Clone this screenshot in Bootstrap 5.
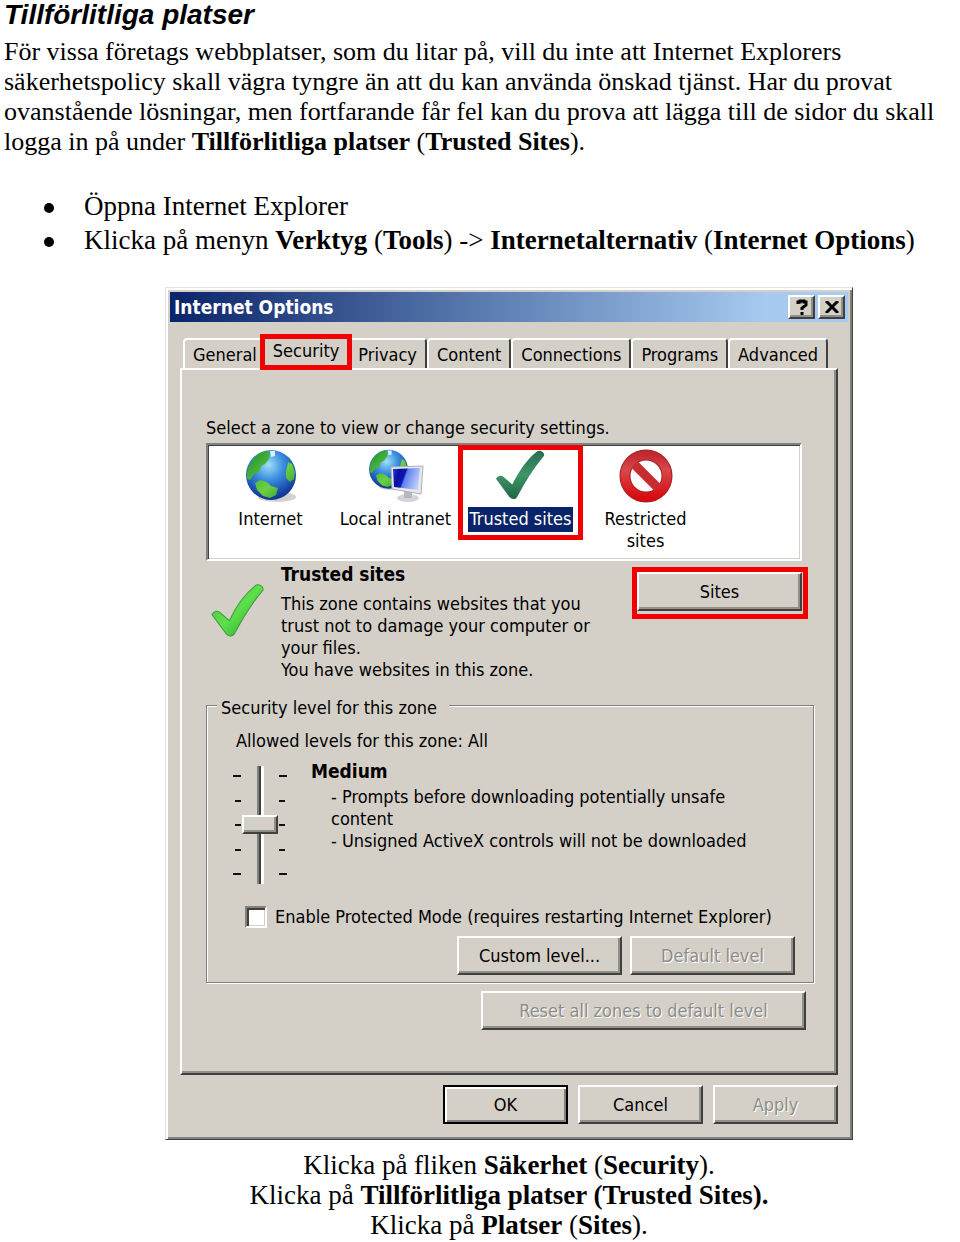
<!DOCTYPE html>
<html lang="sv">
<head>
<meta charset="utf-8">
<meta name="viewport" content="width=device-width, initial-scale=1">
<title>Tillförlitliga platser</title>
<link href="https://cdn.jsdelivr.net/npm/bootstrap@5.3.0/dist/css/bootstrap.min.css" rel="stylesheet">
<style>
:root{--face:#d4d0c8;--shade:#808080;--dark:#404040;--hot:#f00000}
body{font-family:"Liberation Serif",serif;font-size:26px;line-height:30px;color:#000;background:#fff}
.doc-title{font:italic bold 28px/30px "Liberation Sans",sans-serif;margin:0 0 7px}
.steps{padding-left:40px;font-size:27px;line-height:34px;margin:32px 0 30px}
.steps li::before{content:"";display:inline-block;width:10px;height:10px;border-radius:50%;background:#000;margin-right:30px;vertical-align:2px}
.figure-block{padding-left:54px}
.caption-text{font-size:27px;line-height:30px;margin:10px 0 0}
.dialog{max-width:688px;background:var(--face);font:18px/22px "DejaVu Sans Condensed","DejaVu Sans",sans-serif;font-stretch:condensed;
 border:1px solid;border-color:#e4e2de var(--dark) var(--dark) #e4e2de;
 box-shadow:inset 2px 2px #fff,inset -2px -2px var(--shade);padding:4px}
.dialog-body{padding:0 10px}
.strong-text{font-size:19px;font-weight:bold}
.title-bar{height:30px;padding:0 3px 0 4px;gap:3px;background:linear-gradient(90deg,#0a246a,#a6caf0 88%);color:#fff}
.dialog button{color:#000;font-size:18px;line-height:22px}
.face-btn{background:var(--face);border:2px solid;border-color:#fff var(--dark) var(--dark) #fff;box-shadow:inset -2px -2px #909088;border-radius:0;padding:0;height:39px}
.dialog .face-btn:disabled{color:#8c8c88;text-shadow:1px 1px #fff}
.face-btn.is-default{border-color:#000;box-shadow:inset 2px 2px #fff,inset -2px -2px var(--shade)}
.title-bar .face-btn{width:27px;height:24px;display:grid;place-items:center}
.wide-btn{width:165px}
.reset-btn{width:325px}
.foot-btn{width:125px}
.foot-row{gap:10px;padding:10px 0 11px}
.tab-row{padding:0 0 0 3px}
.tab-btn{height:30px;padding:2px 8px 0;background:var(--face);border:2px solid;border-color:#fff var(--dark) transparent #fff;border-bottom:0;border-radius:4px 4px 0 0}
.tab-btn.active{height:36px;padding:0 8px 2px;border:5px solid var(--hot);border-radius:0;margin:0 -4px -2px -7px;position:relative}
.pane{border:2px solid;border-color:#fff var(--dark) var(--dark) #fff;box-shadow:inset -2px -2px #909088;padding:47px 22px 43px 24px}
.zone-list{border:2px solid;border-color:var(--shade) #fff #fff var(--shade);box-shadow:inset 1px 1px var(--dark),inset -1px -1px var(--face);background:#fff;height:118px;margin-right:12px}
.zone-item{width:125px;height:95px;padding:4px 0 0;border:0;background:none;display:flex;flex-direction:column;align-items:center;gap:5px;flex:none}
.zone-item svg{flex:none}
.zone-item:last-child{height:auto;justify-content:flex-start}
.zone-item.active{border:5px solid var(--hot);padding:0;gap:3px}
.zone-item.active span{background:#0a246a;color:#fff;padding:1px 1px 2px}
.zone-info{margin-top:2px}
.zone-mark{margin:21px 17px 0 5px}
.hot-frame{border:5px solid var(--hot);padding:0 1px 3px 0;margin:4px 6px 0 0}
.level-box{position:relative;border:1px solid var(--shade);box-shadow:1px 1px #fff,inset 1px 1px #fff;padding:24px 18px 7px 26px}
.level-box legend{position:absolute;top:-9px;left:10px;width:auto;font-size:18px;line-height:22px;background:var(--face);padding:0 12px 0 4px;margin:0}
.allowed{padding-left:3px}
.slider-block{padding-top:6px}
.rule-text{padding-left:20px}
.protect-row{margin-top:22px;padding-left:12px}
.ticks{height:100px}
.ticks i{width:8px;height:2px;background:#111}
.ticks i:not(:first-child):not(:last-child){width:6px}
.track-box{width:38px;height:118px}
.level-range{appearance:none;width:118px;height:36px;flex:none;margin:0;transform:rotate(-90deg);background:linear-gradient(var(--shade) 0 2px,var(--dark) 2px 4px,#fff 4px) center/100% 7px no-repeat}
.level-range::-webkit-slider-thumb{appearance:none;width:19px;height:36px;background:var(--face);border:2px solid;border-color:#fff #fff var(--dark) var(--dark);box-shadow:inset 2px -2px #909088}
.check-box{appearance:none;width:22px;height:22px;margin:0;background:#fff;border:2px solid;border-color:var(--shade) #fff #fff var(--shade);box-shadow:inset 2px 2px var(--dark),inset -1px -1px var(--face)}
</style>
</head>
<body>
<svg width="0" height="0" class="position-absolute" aria-hidden="true">
 <defs>
  <radialGradient id="sea" cx=".45" cy=".3" r=".75"><stop offset="0" stop-color="#9fe0f8"/><stop offset=".4" stop-color="#3b8ede"/><stop offset=".8" stop-color="#1745a8"/><stop offset="1" stop-color="#0c2c7c"/></radialGradient>
  <linearGradient id="land" x1="0" y1="0" x2="1" y2="1"><stop offset="0" stop-color="#1f8f2c"/><stop offset=".6" stop-color="#6cd043"/><stop offset="1" stop-color="#1e8a2a"/></linearGradient>
  <linearGradient id="ring" x1="0" y1="0" x2="0" y2="1"><stop offset="0" stop-color="#c02a30"/><stop offset=".35" stop-color="#d8484c"/><stop offset="1" stop-color="#d80c10"/></linearGradient>
  <linearGradient id="screen" x1="0" y1=".2" x2="1" y2=".5"><stop offset="0" stop-color="#1c38d0"/><stop offset=".2" stop-color="#0810a0"/><stop offset=".42" stop-color="#0c18b0"/><stop offset=".48" stop-color="#5f80f0"/><stop offset="1" stop-color="#c0d0fc"/></linearGradient>
  <linearGradient id="lime" x1="0" y1="0" x2="1" y2="1"><stop offset="0" stop-color="#4fb848"/><stop offset=".5" stop-color="#5ee04a"/><stop offset="1" stop-color="#1f9a28"/></linearGradient>
  <linearGradient id="pine" x1="0" y1="0" x2="0" y2="1"><stop offset="0" stop-color="#256f52"/><stop offset=".5" stop-color="#3f9468"/><stop offset="1" stop-color="#1d6844"/></linearGradient>
  <symbol id="globe" viewBox="0 0 52 54">
   <ellipse cx="32" cy="48" rx="19" ry="5" fill="#000" opacity=".18"/>
   <circle cx="26" cy="26" r="25" fill="url(#sea)"/>
   <path d="M2 24C4 13 11 4 21 2l4 2-1 6-4 5-4 2-2 6-5 2-4 6-3-1zM10 34l5-3 7 2 4 4 7 2-2 7-6 3-7-2-6-6zM43 13l4 2 3 8-1 7-4 3-4-4 0-6z" fill="url(#land)"/>
   <path d="M25 2l5 0 0 5-4 1z" fill="#e8f8ff" opacity=".9"/>
  </symbol>
  <symbol id="tick" viewBox="0 0 52 52"><path d="M1 30C3 26 7 26 9 28l9 8C24 23 33 10 43 2c3-3 9 0 8 4C40 19 31 34 24 47c-2 5-6 5-9 2z"/></symbol>
 </defs>
</svg>
<main class="ps-1">
 <h1 class="doc-title">Tillförlitliga platser</h1>
 <p class="mb-0 text-nowrap">För vissa företags webbplatser, som du litar på, vill du inte att Internet Explorers<br>säkerhetspolicy skall vägra tyngre än att du kan använda önskad tjänst. Har du provat<br>ovanstående lösningar, men fortfarande får fel kan du prova att lägga till de sidor du skall<br>logga in på under <b>Tillförlitliga platser</b> (<b>Trusted Sites</b>).</p>
 <ul class="steps list-unstyled">
  <li>Öppna Internet Explorer</li>
  <li>Klicka på menyn <b>Verktyg</b> (<b>Tools</b>) -&gt; <b>Internetalternativ</b> (<b>Internet Options</b>)</li>
 </ul>
 <div class="figure-block">
  <section class="dialog mx-auto" aria-label="Internet Options">
   <header class="title-bar d-flex align-items-center mb-2">
    <span class="me-auto strong-text">Internet Options</span>
    <button class="face-btn" type="button" aria-label="Help"><svg width="12" height="16" viewBox="0 0 12 16"><path d="M2 5V3h2V2h4V3h2v3L6 9V11M6 13v3" fill="none" stroke="#000" stroke-width="3"/></svg></button>
    <button class="face-btn" type="button" aria-label="Close"><svg width="14" height="12" viewBox="0 0 14 12"><path d="M1 0l12 12M13 0L1 12" stroke="#000" stroke-width="3"/></svg></button>
   </header>
   <div class="dialog-body">
    <div class="tab-row d-flex align-items-end pt-1" role="tablist">
     <button class="tab-btn" role="tab" type="button">General</button>
     <button class="tab-btn active" role="tab" type="button" aria-selected="true">Security</button>
     <button class="tab-btn" role="tab" type="button">Privacy</button>
     <button class="tab-btn" role="tab" type="button">Content</button>
     <button class="tab-btn" role="tab" type="button">Connections</button>
     <button class="tab-btn" role="tab" type="button">Programs</button>
     <button class="tab-btn" role="tab" type="button">Advanced</button>
    </div>
    <div class="pane" role="tabpanel">
     <p class="mb-1">Select a zone to view or change security settings.</p>
     <div class="zone-list d-flex align-items-start">
      <button class="zone-item" type="button"><svg width="52" height="54"><use href="#globe"/></svg><span>Internet</span></button>
      <button class="zone-item" type="button"><svg width="56" height="54" viewBox="0 0 56 54"><use href="#globe" width="41" height="42"/><ellipse cx="40" cy="49" rx="11" ry="4" fill="#d4d4d8"/><path d="M36 42h8v7h-8z" fill="#b8b8c0"/><path d="M23 18l32-1-2 28-29-5z" fill="#e8e8ec" stroke="#b0b0b8"/><path d="M25 20l27-1-2 22-24-3z" fill="url(#screen)"/></svg><span>Local intranet</span></button>
      <button class="zone-item active" type="button"><svg width="52" height="54" fill="url(#pine)"><use href="#tick" width="50" height="50"/></svg><span>Trusted sites</span></button>
      <button class="zone-item" type="button"><svg width="54" height="54" viewBox="0 0 54 54" fill="none"><circle cx="27" cy="27" r="21" stroke="#a81c20" stroke-width="11"/><path d="M13 13l28 28" stroke="#c82c30" stroke-width="9"/><circle cx="27" cy="27" r="21" stroke="url(#ring)" stroke-width="9"/></svg><span>Restricted<br>sites</span></button>
     </div>
     <div class="zone-info d-flex">
      <svg class="zone-mark" width="53" height="53" fill="url(#lime)" stroke="#3f9a3c"><use href="#tick"/></svg>
      <div class="flex-grow-1">
       <div class="strong-text mb-2">Trusted sites</div>
       <div>This zone contains websites that you<br>trust not to damage your computer or<br>your files.<br>You have websites in this zone.</div>
      </div>
      <div class="hot-frame align-self-start"><button class="face-btn wide-btn" type="button">Sites</button></div>
     </div>
     <fieldset class="level-box mt-4">
      <legend>Security level for this zone</legend>
      <div class="allowed mb-2">Allowed levels for this zone: All</div>
      <div class="d-flex">
       <div class="slider-block d-flex align-items-center">
        <div class="ticks d-flex flex-column justify-content-between align-items-end"><i></i><i></i><i></i><i></i><i></i></div>
        <div class="track-box d-flex align-items-center justify-content-center"><input class="level-range" type="range" min="0" max="4" value="2" aria-label="Security level"></div>
        <div class="ticks d-flex flex-column justify-content-between"><i></i><i></i><i></i><i></i><i></i></div>
       </div>
       <div class="ms-4">
        <div class="strong-text mb-1">Medium</div>
        <div class="rule-text">- Prompts before downloading potentially unsafe<br>content<br>- Unsigned ActiveX controls will not be downloaded</div>
       </div>
      </div>
      <div class="protect-row d-flex align-items-center"><input class="check-box me-2" type="checkbox" id="protect"><label for="protect">Enable Protected Mode (requires restarting Internet Explorer)</label></div>
      <div class="d-flex justify-content-end gap-2 mt-2">
       <button class="face-btn wide-btn" type="button">Custom level...</button>
       <button class="face-btn wide-btn" type="button" disabled>Default level</button>
      </div>
     </fieldset>
     <div class="d-flex justify-content-end mt-2 me-2"><button class="face-btn reset-btn" type="button" disabled>Reset all zones to default level</button></div>
    </div>
    <footer class="foot-row d-flex justify-content-end">
     <button class="face-btn foot-btn is-default" type="button">OK</button>
     <button class="face-btn foot-btn" type="button">Cancel</button>
     <button class="face-btn foot-btn" type="button" disabled>Apply</button>
    </footer>
   </div>
  </section>
  <p class="caption-text text-center">Klicka på fliken <b>Säkerhet</b> (<b>Security</b>).<br>Klicka på <b>Tillförlitliga platser (Trusted Sites).</b><br>Klicka på <b>Platser</b> (<b>Sites</b>).</p>
 </div>
</main>
<script src="https://cdn.jsdelivr.net/npm/bootstrap@5.3.0/dist/js/bootstrap.bundle.min.js"></script>
</body>
</html>
